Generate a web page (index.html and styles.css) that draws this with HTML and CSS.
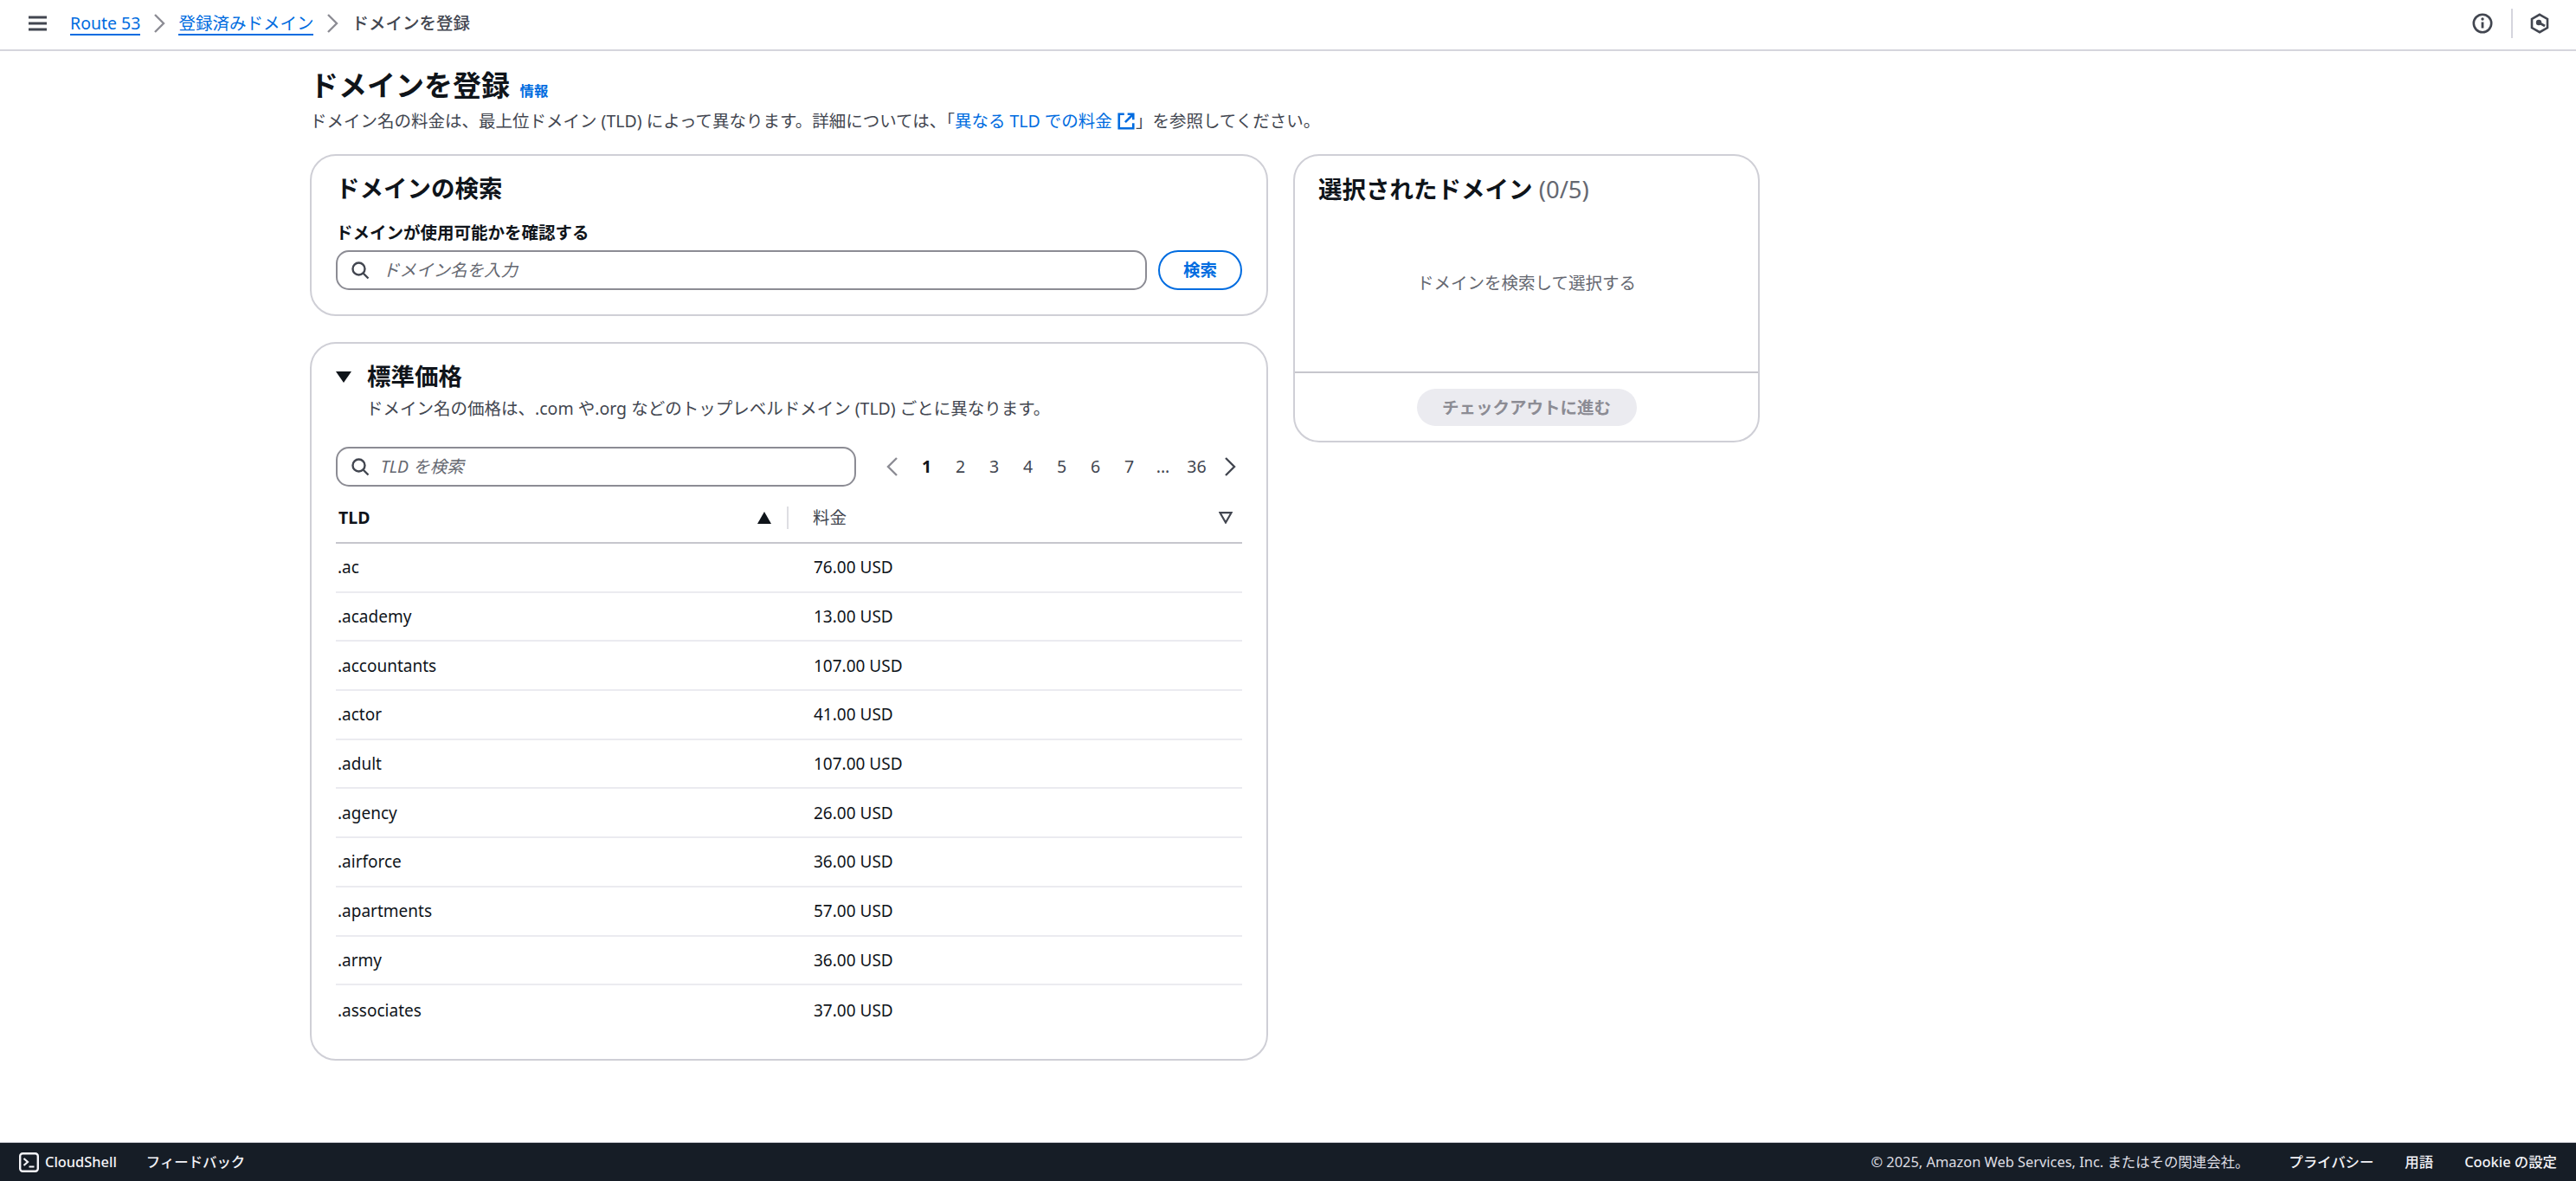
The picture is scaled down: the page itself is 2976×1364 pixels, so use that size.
FILE: index.html
```html
<!DOCTYPE html>
<html lang="ja">
<head>
<meta charset="utf-8">
<title>ドメインを登録</title>
<link rel="stylesheet" href="styles.css">
</head>
<body>
<header class="topbar">
  <button class="menu" aria-label="menu"><svg width="21" height="18" viewBox="0 0 21 18"><path d="M0 2h21M0 9h21M0 16h21" stroke="#424650" stroke-width="3"/></svg></button>
  <nav class="crumbs">
    <a href="#">Route 53</a>
    <svg class="chev" width="14" height="24" viewBox="0 0 14 24"><path d="M2 2l10 10L2 22" fill="none" stroke="#8c8c94" stroke-width="2.4"/></svg>
    <a href="#">登録済みドメイン</a>
    <svg class="chev" width="14" height="24" viewBox="0 0 14 24"><path d="M2 2l10 10L2 22" fill="none" stroke="#8c8c94" stroke-width="2.4"/></svg>
    <span class="current">ドメインを登録</span>
  </nav>
  <div class="top-tools">
    <svg width="24" height="24" viewBox="0 0 24 24"><circle cx="12" cy="12" r="10.2" fill="none" stroke="#424650" stroke-width="2.6"/><path d="M12 10.5v7" stroke="#424650" stroke-width="2.8"/><circle cx="12" cy="7" r="1.7" fill="#424650"/></svg>
    <span class="tool-sep"></span>
    <svg width="24" height="24" viewBox="0 0 24 24"><path d="M12 1.8l9 5.1v10.2l-9 5.1-9-5.1V6.900z" fill="none" stroke="#424650" stroke-width="2.6"/><circle cx="11" cy="11" r="3.200" fill="#424650"/><path d="M11 11l7 4" stroke="#424650" stroke-width="2.6"/></svg>
  </div>
</header>

<main class="page">
  <h1 class="page-title">ドメインを登録 <a class="info" href="#">情報</a></h1>
  <p class="page-sub">ドメイン名の料金は、最上位ドメイン (TLD) によって異なります。詳細については、「<a href="#" class="ext">異なる TLD での料金 <svg width="22" height="22" viewBox="0 0 20 20"><path d="M8 2.500H2.500v15h15V12M11.500 2.500h6v6M17.500 2.500L9 11" fill="none" stroke="#006ce0" stroke-width="2.400"/></svg></a>」を参照してください。</p>

  <div class="columns">
    <div class="left-col">
      <section class="card search-card">
        <h2 class="card-title">ドメインの検索</h2>
        <label class="field-label">ドメインが使用可能かを確認する</label>
        <div class="search-row">
          <div class="input grow">
            <svg class="glass" width="22" height="22" viewBox="0 0 22 22"><circle cx="9.500" cy="9.500" r="7" fill="none" stroke="#424650" stroke-width="2.400"/><path d="M14.500 14.500l6 6" stroke="#424650" stroke-width="2.400"/></svg>
            <span class="placeholder">ドメイン名を入力</span>
          </div>
          <button class="btn-outline">検索</button>
        </div>
      </section>

      <section class="card price-card">
        <div class="expander">
          <svg class="caret" width="18" height="18" viewBox="0 0 18 18"><path d="M0 3h18L9 16z" fill="#0f141a"/></svg>
          <h2 class="card-title">標準価格</h2>
        </div>
        <p class="expander-desc">ドメイン名の価格は、.com や.org などのトップレベルドメイン (TLD) ごとに異なります。</p>
        <div class="tools">
          <div class="input tld">
            <svg class="glass" width="22" height="22" viewBox="0 0 22 22"><circle cx="9.500" cy="9.500" r="7" fill="none" stroke="#424650" stroke-width="2.400"/><path d="M14.500 14.500l6 6" stroke="#424650" stroke-width="2.400"/></svg>
            <span class="placeholder">TLD を検索</span>
          </div>
          <div class="pager">
            <svg class="pg-arrow" width="14" height="24" viewBox="0 0 14 24"><path d="M12 2L2 12l10 10" fill="none" stroke="#8c8c94" stroke-width="2.400"/></svg>
            <span class="pg on">1</span><span class="pg">2</span><span class="pg">3</span><span class="pg">4</span><span class="pg">5</span><span class="pg">6</span><span class="pg">7</span><span class="pg">...</span><span class="pg">36</span>
            <svg class="pg-arrow" width="14" height="24" viewBox="0 0 14 24"><path d="M2 2l10 10L2 22" fill="none" stroke="#424650" stroke-width="2.400"/></svg>
          </div>
        </div>
        <div class="table">
          <div class="thead">
            <div class="th first"><span class="th-label">TLD</span><svg width="16" height="14" viewBox="0 0 16 14"><path d="M8 0l8 14H0z" fill="#0f141a"/></svg></div>
            <div class="th second"><span class="th-label light">料金</span><svg width="16" height="14" viewBox="0 0 16 14"><path d="M1.500 1.200h13L8 12.500z" fill="none" stroke="#424650" stroke-width="2.200"/></svg></div>
          </div>
          <div class="tr"><span class="td-a">.ac</span><span>76.00 USD</span></div>
          <div class="tr"><span class="td-a">.academy</span><span>13.00 USD</span></div>
          <div class="tr"><span class="td-a">.accountants</span><span>107.00 USD</span></div>
          <div class="tr"><span class="td-a">.actor</span><span>41.00 USD</span></div>
          <div class="tr"><span class="td-a">.adult</span><span>107.00 USD</span></div>
          <div class="tr"><span class="td-a">.agency</span><span>26.00 USD</span></div>
          <div class="tr"><span class="td-a">.airforce</span><span>36.00 USD</span></div>
          <div class="tr"><span class="td-a">.apartments</span><span>57.00 USD</span></div>
          <div class="tr"><span class="td-a">.army</span><span>36.00 USD</span></div>
          <div class="tr last"><span class="td-a">.associates</span><span>37.00 USD</span></div>
        </div>
      </section>
    </div>

    <aside class="card cart">
      <h2 class="card-title cart-title">選択されたドメイン <span class="count">(0/5)</span></h2>
      <p class="empty">ドメインを検索して選択する</p>
      <div class="cart-foot"><button class="btn-disabled">チェックアウトに進む</button></div>
    </aside>
  </div>
</main>

<footer class="footer">
  <a class="foot-link shell" href="#"><svg width="23" height="23" viewBox="0 0 23 23"><rect x="1.200" y="1.200" width="20.600" height="20.600" rx="3" fill="none" stroke="#f3f3f7" stroke-width="2.400"/><path d="M5.500 7l4.500 4-4.500 4M11.500 16.500h6" fill="none" stroke="#f3f3f7" stroke-width="2.200"/></svg>CloudShell</a>
  <a class="foot-link" href="#">フィードバック</a>
  <span class="copy">© 2025, Amazon Web Services, Inc. またはその関連会社。</span>
  <a class="foot-link" href="#">プライバシー</a>
  <a class="foot-link" href="#">用語</a>
  <a class="foot-link" href="#">Cookie の設定</a>
</footer>
</body>
</html>
```
FILE: styles.css
```css
* { box-sizing: border-box; }
html, body { height: 100%; }
body {
  margin: 0;
  display: flex;
  flex-direction: column;
  height: 100vh;
  overflow: hidden;
  background: #fff;
  color: #0f141a;
  font-family: "Noto Sans", "Noto Sans CJK JP", sans-serif;
  font-size: 19.500px;
  line-height: 26px;
}
a { color: #006ce0; text-decoration: none; }
h1, h2, p { margin: 0; }
button { font: inherit; padding: 0; background: none; border: 0; }

.topbar {
  height: 59px;
  flex: none;
  display: flex;
  align-items: center;
  padding: 0 30px 4px 33px;
  border-bottom: 2px solid #d5d5dd;
}
.menu { display: flex; width: 21px; margin-right: 27px; }
.crumbs { display: flex; align-items: center; gap: 15px; }
.crumbs a { border-bottom: 2px solid #006ce0; line-height: 24px; margin-top: 2px; }
.current { color: #424650; font-weight: 500; }
.chev { flex: none; }
.top-tools { margin-left: auto; display: flex; align-items: center; gap: 19px; }
.top-tools svg:first-child { margin-right: 2px; }
.tool-sep { width: 2px; height: 34px; background: #d5d5dd; }

.page { flex: 1; padding: 21px 0 0 358px; }
.page-title { font-size: 33px; line-height: 38px; height: 38px; font-weight: 700; }
.info { font-size: 16.400px; font-weight: 700; margin-left: 3px; }
.page-sub { color: #424650; margin-top: 9px; font-size: 19.500px; }
.ext { font-weight: 400; }
.ext svg { vertical-align: -4px; }

.columns { display: flex; gap: 29px; align-items: flex-start; margin-top: 25px; }
.left-col { width: 1107px; display: flex; flex-direction: column; gap: 30px; }
.card { border: 2px solid #cfcfd6; border-radius: 30px; background: #fff; }
.card-title { font-size: 27.500px; line-height: 34px; font-weight: 700; }

.search-card { padding: 21px 28px 28px 28px; height: 187px; }
.field-label { display: block; font-weight: 700; margin-top: 21px; }
.search-row { display: flex; gap: 13px; margin-top: 7px; }
.input {
  height: 46px;
  display: flex;
  align-items: center;
  gap: 15px;
  padding-left: 15px;
  border: 2px solid #8c8c94;
  border-radius: 15px;
}
.grow { flex: 1; }
.glass { flex: none; }
.placeholder { color: #656871; font-style: italic; }
.btn-outline {
  width: 97px;
  height: 46px;
  border: 2px solid #006ce0;
  border-radius: 23px;
  color: #006ce0;
  font-weight: 700;
}

.price-card { padding: 21px 28px 27px 28px; height: 830px; }
.expander { display: flex; align-items: center; gap: 18px; }
.caret { flex: none; }
.expander-desc { color: #424650; margin: 7px 0 0 35px; }
.tools { display: flex; align-items: center; margin-top: 31px; }
.tld { width: 601px; gap: 13px; }
.pager { display: flex; align-items: center; margin-left: 35px; }
.pg-arrow { flex: none; }
.pg { width: 39px; text-align: center; color: #424650; }
.pg.on { color: #0f141a; font-weight: 700; }
.pager .pg:nth-child(2) { margin-left: 13px; }
.pager .pg-arrow:last-child { margin-left: 12px; }

.table { margin-top: 8px; }
.thead { display: flex; height: 58px; border-bottom: 2.500px solid #c6c6cd; align-items: center; font-weight: 700; }
.th { display: flex; align-items: center; justify-content: space-between; height: 26px; }
.first { width: 523px; padding: 0 18px 0 3px; border-right: 2px solid #dedee3; }
.second { flex: 1; padding: 0 11px 0 28px; }
.light { font-weight: 400; color: #424650; }
.tr {
  display: flex;
  align-items: center;
  height: 56.700px;
  border-bottom: 2px solid #ebebf0;
  font-size: 19px;
}
.tr.last { border-bottom: 0; }
.td-a { width: 552px; padding-left: 2px; }

.cart { width: 539px; height: 333px; display: flex; flex-direction: column; }
.cart-title { padding: 22px 0 0 27px; }
.count { font-weight: 400; color: #656871; }
.empty { text-align: center; color: #656871; padding-top: 78px; flex: 1; }
.cart-foot { border-top: 2px solid #c6c6cd; padding-top: 18px; height: 80px; display: flex; justify-content: center; }
.btn-disabled { width: 254px; height: 43px; border-radius: 22px; background: #ebebf0; color: #8c8c94; font-weight: 700; }

.footer {
  flex: none;
  height: 45px;
  display: flex;
  align-items: center;
  background: #161d26;
  border-top: 1px solid #c6c6cd;
  padding: 0 22px;
  font-size: 16.400px;
}
.foot-link { color: #f3f3f7; font-weight: 500; }
.shell { display: flex; align-items: center; gap: 7px; margin-right: 34px; }
.copy { margin-left: auto; color: #dedee3; margin-right: 46px; }
.footer .copy ~ .foot-link { margin-right: 36px; }
.footer .copy ~ .foot-link:last-child { margin-right: 0; }
```
